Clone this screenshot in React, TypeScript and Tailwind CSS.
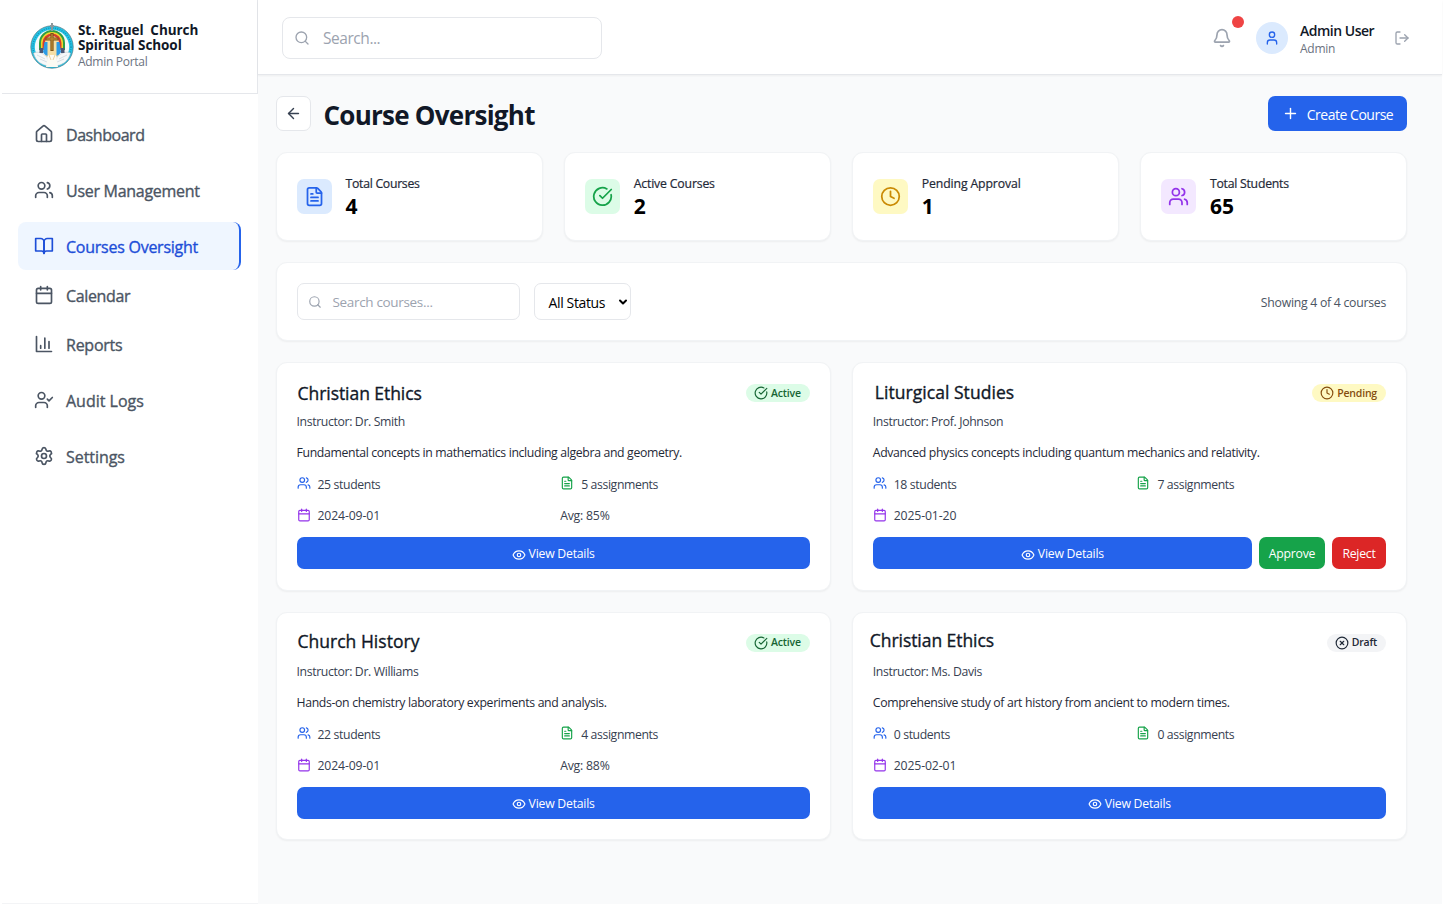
import React from "react";
import {
  House, Users, Calendar, UserCheck, Settings, Search, Bell, User, LogOut, ArrowLeft, Plus,
  FileText, CircleCheckBig, Clock, CircleX, Eye, ChevronDown,
} from "lucide-react";

function BookIcon({ size = 20 }: { size?: number }) {
  return (
    <svg width={size} height={size} viewBox="0 0 24 24" fill="none" stroke="currentColor" strokeWidth="2" strokeLinecap="round" strokeLinejoin="round">
      <path d="M2 3h6a4 4 0 0 1 4 4v14a3 3 0 0 0-3-3H2z" />
      <path d="M22 3h-6a4 4 0 0 0-4 4v14a3 3 0 0 1 3-3h7z" />
    </svg>
  );
}

function ChartIcon({ size = 20 }: { size?: number }) {
  return (
    <svg width={size} height={size} viewBox="0 0 24 24" fill="none" stroke="currentColor" strokeWidth="2" strokeLinecap="round" strokeLinejoin="round">
      <path d="M3 3v18h18" />
      <path d="M18 17V9M13 17V5M8 17v-3" />
    </svg>
  );
}

function Logo() {
  return (
    <svg width="44" height="48" viewBox="0 0 44 48" className="shrink-0">
      <circle cx="22" cy="25" r="21.2" fill="#22c3e6" stroke="#4d7480" strokeWidth="0.7" />
      <circle cx="22" cy="25" r="19" fill="none" stroke="#1e8fb0" strokeWidth="1.4" strokeDasharray="1 1.3" />
      <circle cx="22" cy="25" r="17.2" fill="#f4f9f9" />
      <path d="M9 28V21a13 13 0 0 1 26 0v7h-4V21a9 9 0 0 0-18 0v7z" fill="#2f9e44" />
      <path d="M11 28V21a11 11 0 0 1 22 0v7h-3V21a8 8 0 0 0-16 0v7z" fill="#f2d52c" />
      <path d="M12.500 28V21a9.500 9.500 0 0 1 19 0v7h-3V21a6.500 6.500 0 0 0-13 0v7z" fill="#d63a2d" />
      <path d="M15 35V21a7 7 0 0 1 14 0v14z" fill="#f5dfa6" />
      <path d="M14.500 20h3v14c-2-1-3.500-2-4.500-4zM29.500 20h-3v14c2-1 3.500-2 4.500-4z" fill="#2b9be6" />
      <path d="M3.500 31c5-2 9 0 13.500 4l2 9c-8-1-13.500-5-15.500-13zM40.500 31c-5-2-9 0-13.500 4l-2 9c8-1 13.500-5 15.500-13z" fill="#f6f8f9" stroke="#b4c0c5" strokeWidth="0.5" />
      <path d="M7 33l8 4M10 37l7 3M37 33l-8 4M34 37l-7 3" stroke="#c2cdd1" strokeWidth="0.6" />
      <path d="M18 33h8l2 12H16z" fill="#fcfaf3" />
      <path d="M19 33l2 5M25 33l-2 5" stroke="#e2c888" strokeWidth="0.8" />
      <path d="M9.500 26H13v5H9.500zM31 26h3.500v5H31z" fill="#4c5874" />
      <path d="M22 11v18M15.500 17h13" stroke="#7c5317" strokeWidth="3.200" />
      <path d="M22 12v16M16.500 17h11" stroke="#b98632" strokeWidth="1.400" />
      <path d="M22 1v8M20 4h4" stroke="#8d989c" strokeWidth="2" />
    </svg>
  );
}

const nav = [
  { label: "Dashboard", icon: <House size={20} />, cls: "tracking-[-0.45px]" },
  { label: "User Management", icon: <Users size={20} />, cls: "mt-2 tracking-[-0.28px]" },
  { label: "Courses Oversight", icon: <BookIcon />, cls: "mt-2 tracking-[-0.25px]", active: true },
  { label: "Calendar", icon: <Calendar size={20} />, cls: "mt-px tracking-[-0.35px]" },
  { label: "Reports", icon: <ChartIcon />, cls: "mt-px tracking-[-0.25px]" },
  { label: "Audit Logs", icon: <UserCheck size={20} />, cls: "mt-2 tracking-[0px]" },
  { label: "Settings", icon: <Settings size={20} />, cls: "mt-2 tracking-[-0.05px]" },
];

const stats = [
  { label: "Total Courses", value: "4", icon: <FileText size={21} />, cls: "bg-blue-100 text-[#2563eb]", track: "tracking-[-0.28px]" },
  { label: "Active Courses", value: "2", icon: <CircleCheckBig size={21} />, cls: "bg-[#dcfce7] text-[#16a34a]", track: "tracking-[-0.16px]" },
  { label: "Pending Approval", value: "1", icon: <Clock size={21} />, cls: "bg-[#fef9c3] text-[#ca8a04]", track: "tracking-[-0.12px]" },
  { label: "Total Students", value: "65", icon: <Users size={21} />, cls: "bg-[#f3e8ff] text-[#9333ea]", track: "tracking-[-0.24px]" },
];

type Status = "Active" | "Pending" | "Draft";
interface Course {
  title: string;
  titleCls: string;
  teacher: string;
  text: string;
  students: number;
  tasks: number;
  date: string;
  avg?: string;
  status: Status;
}

const courses: Course[] = [
  { title: "Christian Ethics", titleCls: "ml-px tracking-[-0.05px]", teacher: "Dr. Smith", text: "Fundamental concepts in mathematics including algebra and geometry.", students: 25, tasks: 5, date: "2024-09-01", avg: "85%", status: "Active" },
  { title: "Liturgical Studies", titleCls: "-mt-px ml-0.5 tracking-[0.05px]", teacher: "Prof. Johnson", text: "Advanced physics concepts including quantum mechanics and relativity.", students: 18, tasks: 7, date: "2025-01-20", status: "Pending" },
  { title: "Church History", titleCls: "-mt-0.5 ml-px tracking-[0.02px]", teacher: "Dr. Williams", text: "Hands-on chemistry laboratory experiments and analysis.", students: 22, tasks: 4, date: "2024-09-01", avg: "88%", status: "Active" },
  { title: "Christian Ethics", titleCls: "-mt-[3px] -ml-[3px] tracking-[-0.05px]", teacher: "Ms. Davis", text: "Comprehensive study of art history from ancient to modern times.", students: 0, tasks: 0, date: "2025-02-01", status: "Draft" },
];

const badge = {
  Active: { cls: "bg-[#dcfce7] text-[#166534]", icon: <CircleCheckBig size={14} /> },
  Pending: { cls: "bg-[#fef9c3] text-[#854d0e]", icon: <Clock size={14} /> },
  Draft: { cls: "bg-[#f3f4f6] text-[#1f2937]", icon: <CircleX size={14} /> },
};

const card = "rounded-[11px] border border-[#f1f3f5] bg-white shadow-[0_1px_2px_rgba(0,0,0,0.05)]";
const medium = "[-webkit-text-stroke:0.35px_currentColor]";

function CourseCard({ c }: { c: Course }) {
  const b = badge[c.status];
  return (
    <article className={`${card} flex h-[228.500px] flex-col px-5 pt-[21px]`}>
      <div className="flex h-[26px] items-start justify-between">
        <h3 className={`${c.titleCls} ${medium} text-[17.5px] leading-[19px] text-[#111827]`}>{c.title}</h3>
        <span className={`${b.cls} flex h-[18px] items-center gap-[3px] rounded-full pr-[9px] pl-2 text-[10.5px] font-semibold tracking-[-0.2px]`}>
          {b.icon}
          <span className="pt-px">{c.status}</span>
        </span>
      </div>
      <p className="h-[31px] text-[12.25px] leading-[24px] tracking-[-0.36px] text-[#374151]">Instructor: {c.teacher}</p>
      <p className="h-[31px] text-[12.25px] leading-[24px] tracking-[-0.34px] text-[#1f2937]">{c.text}</p>
      <div className="grid grid-cols-2 gap-x-3.5 text-[12.25px] leading-[25px] tracking-[-0.38px] text-[#374151]">
        <div className="flex h-[31px] items-start gap-[7px]">
          <Users size={14} className="mt-[4px] text-[#2563eb]" />
          {c.students} students
        </div>
        <div className="flex h-[31px] items-start gap-[7px]">
          <FileText size={14} className="mt-[4px] text-[#16a34a]" />
          {c.tasks} assignments
        </div>
        <div className="flex h-[31px] items-start gap-[7px] tracking-[-0.14px]">
          <Calendar size={14} className="mt-[5px] text-[#9333ea]" />
          {c.date}
        </div>
        <div className="tracking-[-0.2px]">{c.avg ? `Avg: ${c.avg}` : ""}</div>
      </div>
      <div className="mt-[3px] flex gap-[7px] text-[12.25px] tracking-[-0.24px] text-white">
        <button className="flex h-8 flex-1 items-center justify-center gap-[3px] rounded-[7px] bg-[#2563eb]">
          <Eye size={14} className="mt-[3px]" />
          <span className="pt-[3px]">View Details</span>
        </button>
        {c.status === "Pending" && (
          <>
            <button className="h-8 w-[66px] rounded-[7px] bg-[#16a34a] pt-[3px]">Approve</button>
            <button className="h-8 w-[54px] rounded-[7px] bg-[#dc2626] pt-[3px]">Reject</button>
          </>
        )}
      </div>
    </article>
  );
}

export default function App() {
  return (
    <div className="flex h-[907px] w-[1444px] overflow-hidden bg-white pr-0.5 pb-[3px] pl-0.5 font-['Open_Sans','Noto_Sans',sans-serif]">
      <aside className="flex w-[256px] shrink-0 flex-col border-b border-[#f3f4f6]">
        <div className="flex h-[94px] items-start border-r border-b border-[#e5e7eb] pt-[22px] pl-[28px]">
          <Logo />
          <div className="ml-1 pt-px">
            <div className="text-[13.500px] leading-[15px] font-bold tracking-[-0.08px] whitespace-pre text-[#111827]">{"St. Raguel  Church\nSpiritual School"}</div>
            <div className="mt-px text-[12px] leading-[15px] tracking-[-0.28px] text-[#6b7280]">Admin Portal</div>
          </div>
        </div>
        <nav className="flex flex-col pt-4 pr-[17px] pl-4">
          {nav.map((n) => (
            <a
              key={n.label}
              className={`${n.cls} flex h-12 items-center gap-3 rounded-[8px] pl-4 text-[16px] ${
                n.active ? "border-r-2 border-[#2563eb] bg-[#eff6ff] text-[#1d4ed8]" : "text-[#4b5563]"
              }`}
            >
              {n.icon}
              <span className={`pt-0.5 ${medium}`}>{n.label}</span>
            </a>
          ))}
        </nav>
      </aside>

      <div className="flex min-w-0 flex-1 flex-col bg-[#f9fafb]">
        <header className="flex h-[75px] shrink-0 items-start justify-between border-b border-[#e5e7eb] bg-white pr-8 pl-6 shadow-[0_1px_2px_rgba(0,0,0,0.05)]">
          <label className="mt-[17px] flex h-[42px] w-80 items-center rounded-[8px] border border-[#e5e7eb] pl-[11px]">
            <Search size={16} className="text-[#9ca3af]" />
            <span className="ml-[13px] pt-0.5 text-[15.500px] tracking-[-0.45px] text-[#9ca3af]">Search...</span>
          </label>
          <div className="flex h-[75px] items-center">
            <div className="relative">
              <Bell size={20} className="text-[#9ca3af]" />
              <span className="absolute -top-[12px] left-[20px] size-3 rounded-full bg-[#ef4444]" />
            </div>
            <span className="ml-6 flex size-8 items-center justify-center rounded-full bg-[#dbeafe] text-[#2563eb]">
              <User size={16} />
            </span>
            <div className="ml-3 w-[94px] pt-[3px]">
              <div className="text-[14px] leading-[18px] font-semibold tracking-[-0.5px] whitespace-nowrap text-[#111827]">Admin User</div>
              <div className="text-[12px] leading-[17px] tracking-[-0.25px] text-[#6b7280]">Admin</div>
            </div>
            <LogOut size={16} className="text-[#9ca3af]" />
          </div>
        </header>

        <main className="flex flex-col pt-[21px] pr-[35px] pl-[17.500px]">
          <div className="flex h-[35px] items-center">
            <button className="flex size-[35px] items-center justify-center rounded-[7px] border border-[#e5e7eb] bg-white text-[#374151]">
              <ArrowLeft size={17} />
            </button>
            <h1 className="ml-[13px] pt-[3px] text-[26px] font-bold tracking-[-0.75px] text-[#111827]">Course Oversight</h1>
            <button className="ml-auto flex h-[35px] w-[139px] items-center justify-center gap-2 rounded-[7px] bg-[#2563eb] text-[14px] tracking-[-0.48px] text-white">
              <Plus size={17} />
              <span className="pt-px">Create Course</span>
            </button>
          </div>

          <section className="mt-[21px] grid grid-cols-4 gap-[21px]">
            {stats.map((s) => (
              <div key={s.label} className={`${card} flex h-[89px] items-center gap-[14px] pl-5`}>
                <span className={`${s.cls} flex size-[35px] items-center justify-center rounded-[7px]`}>{s.icon}</span>
                <div className="pt-0.5">
                  <div className={`${s.track} text-[12.25px] leading-[18px] text-[#1f2937] [-webkit-text-stroke:0.2px_currentColor]`}>{s.label}</div>
                  <div className="text-[21px] leading-[27px] font-bold text-black">{s.value}</div>
                </div>
              </div>
            ))}
          </section>

          <section className={`${card} mt-[21px] flex h-[79px] items-center px-5`}>
            <label className="flex h-[37px] w-[223px] items-center rounded-[7px] border border-[#e5e7eb] pl-[10px]">
              <Search size={14} className="text-[#9ca3af]" />
              <span className="ml-[11px] pt-0.5 text-[13.500px] tracking-[-0.33px] text-[#9ca3af]">Search courses...</span>
            </label>
            <button className="ml-[14px] flex h-[37px] w-[97px] items-center justify-between rounded-[7px] border border-[#e5e7eb] pr-px pl-[14px] text-[14px] tracking-[-0.36px] text-black">
              <span className="pt-0.5">All Status</span>
              <ChevronDown size={12} strokeWidth={4} />
            </button>
            <span className="ml-auto pt-[3px] text-[12.25px] tracking-[-0.26px] text-[#4b5563]">Showing 4 of 4 courses</span>
          </section>

          <section className="mt-[21px] grid grid-cols-2 gap-[21px]">
            {courses.map((c, i) => (
              <CourseCard key={i} c={c} />
            ))}
          </section>
        </main>
      </div>
    </div>
  );
}
